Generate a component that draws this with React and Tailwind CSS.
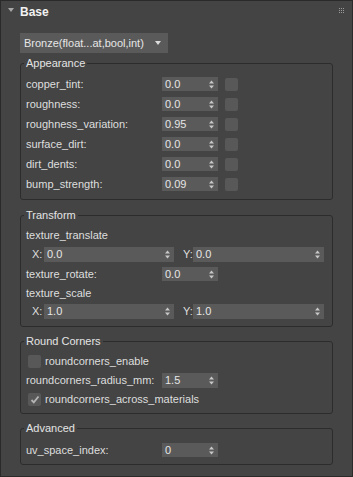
import React from "react";

function Arrows() {
  return (
    <svg width="5" height="9" viewBox="0 0 5 9" className="shrink-0">
      <polygon points="0,3.5 2.5,0.5 5,3.5" fill="#c8c8c8" />
      <polygon points="0,5.5 5,5.5 2.5,8.5" fill="#c8c8c8" />
    </svg>
  );
}

function Spinner({ value, className }) {
  return (
    <div
      className={
        "flex items-center justify-between bg-[#5a5a5a] pl-[3px] pr-[4px] text-[#e6e6e6] leading-none " +
        className
      }
    >
      <span>{value}</span>
      <Arrows />
    </div>
  );
}

function Check({ checked }) {
  return (
    <div className="flex h-[13px] w-[13px] shrink-0 items-center justify-center rounded-[2px] bg-[#585858]">
      {checked && (
        <svg width="10" height="9" viewBox="0 0 10 9">
          <path d="M1.5 5 L3.8 7.3 L8.5 1.5" stroke="#b4b4b4" strokeWidth="1.8" fill="none" />
        </svg>
      )}
    </div>
  );
}

function Group({ title, children, className }) {
  return (
    <fieldset
      className={
        "rounded-[3px] border border-[#2c2c2c] px-0 " + (className || "")
      }
    >
      <legend className="ml-[3px] px-[2px] text-[11px] leading-[14px] text-[#e4e4e4]">
        {title}
      </legend>
      {children}
    </fieldset>
  );
}

function ParamRow({ label, value }) {
  return (
    <div className="flex h-5 items-center pl-[5px]">
      <span className="w-[136px] shrink-0">{label}</span>
      <Spinner value={value} className="h-[14px] w-[56px]" />
      <div className="ml-[7px]">
        <Check />
      </div>
    </div>
  );
}

function XYRow({ x, y, h }) {
  return (
    <div className={"flex items-center pl-[11px] " + h}>
      <span className="w-[12px]">X:</span>
      <Spinner value={x} className="h-[15px] w-[130px]" />
      <span className="ml-[9px] w-[10px]">Y:</span>
      <Spinner value={y} className="h-[15px] w-[131px]" />
    </div>
  );
}

export default function App() {
  return (
    <div
      className="flex h-[477px] w-[353px] flex-col border border-[#2a2a2a] bg-[#444444] text-[11px] text-[#dedede]"
      style={{ fontFamily: '"Liberation Sans", Arial, sans-serif' }}
    >
      {/* header */}
      <div className="flex h-[21px] items-center">
        <svg width="6" height="5" viewBox="0 0 6 5" className="ml-[7px] mt-[-2px]">
          <polygon points="0,0 6,0 3,4" fill="#a8a8a8" />
        </svg>
        <span className="ml-[6px] text-[12px] font-bold text-[#f2f2f2]">Base</span>
        <svg width="5" height="5" viewBox="0 0 5 5" className="ml-auto mr-[8px] mt-[-3px]">
          {[0, 2, 4].map((yy) =>
            [0, 2, 4].map((xx) => (
              <rect key={xx + "-" + yy} x={xx} y={yy} width="1" height="1" fill="#9a9a9a" />
            ))
          )}
        </svg>
      </div>

      <div className="flex flex-col px-[19px]">
        {/* dropdown */}
        <div className="mt-[11px] flex h-[20px] w-[148px] items-center bg-[#5a5a5a] pl-[4px] pr-[7px] text-[#e6e6e6]">
          <span>Bronze(float...at,bool,int)</span>
          <svg width="6" height="4" viewBox="0 0 6 4" className="ml-auto">
            <polygon points="0,0 6,0 3,4" fill="#dcdcdc" />
          </svg>
        </div>

        <Group title="Appearance" className="mt-[3px] pb-[5px]">
          <div className="mt-[4px]">
            <ParamRow label="copper_tint:" value="0.0" />
            <ParamRow label="roughness:" value="0.0" />
            <ParamRow label="roughness_variation:" value="0.95" />
            <ParamRow label="surface_dirt:" value="0.0" />
            <ParamRow label="dirt_dents:" value="0.0" />
            <ParamRow label="bump_strength:" value="0.09" />
          </div>
        </Group>

        <Group title="Transform" className="mt-[8px] pb-[5px]">
          <div className="mt-[4px]">
            <div className="flex h-[18px] items-center pl-[5px]">texture_translate</div>
            <XYRow x="0.0" y="0.0" h="h-[20px]" />
            <div className="flex h-5 items-center pl-[5px]">
              <span className="w-[136px] shrink-0">texture_rotate:</span>
              <Spinner value="0.0" className="h-[14px] w-[56px]" />
            </div>
            <div className="flex h-[18px] items-center pl-[5px]">texture_scale</div>
            <XYRow x="1.0" y="1.0" h="h-[19px]" />
          </div>
        </Group>

        <Group title="Round Corners" className="mt-[7px] pb-[5px]">
          <div className="mt-[4px]">
            <div className="flex h-[18px] items-center pl-[7px]">
              <Check />
              <span className="ml-[4px]">roundcorners_enable</span>
            </div>
            <div className="flex h-5 items-center pl-[5px]">
              <span className="w-[136px] shrink-0">roundcorners_radius_mm:</span>
              <Spinner value="1.5" className="h-[15px] w-[56px]" />
            </div>
            <div className="flex h-[18px] items-center pl-[7px]">
              <Check checked />
              <span className="ml-[4px]">roundcorners_across_materials</span>
            </div>
          </div>
        </Group>

        <Group title="Advanced" className="mt-[7px] pb-[4px]">
          <div className="mt-[5px]">
            <div className="flex h-5 items-center pl-[5px]">
              <span className="w-[136px] shrink-0">uv_space_index:</span>
              <Spinner value="0" className="h-[14px] w-[56px]" />
            </div>
          </div>
        </Group>
      </div>
    </div>
  );
}
